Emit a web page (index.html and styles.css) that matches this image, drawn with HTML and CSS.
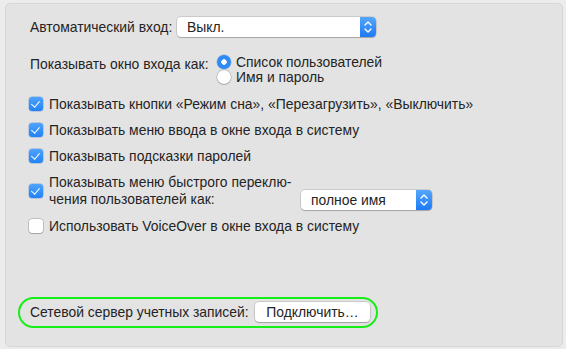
FILE: index.html
```html
<!DOCTYPE html>
<html lang="ru">

<head>
  <meta charset="UTF-8">
  <meta name="viewport" content="width=device-width, initial-scale=1.0">
  <title>Параметры входа</title>
  <link rel="stylesheet" href="styles.css">
</head>

<body>
  <div class="panel">
    <div class="row row-auto">
      <span class="label label-auto">Автоматический вход:</span>
      <div class="popup popup-auto">
        <span class="popup-value">Выкл.</span>
        <span class="stepper">
          <svg width="16" height="20" viewBox="0 0 16 20">
            <path d="M5 8 L8 5 L11 8" fill="none" stroke="#fff" stroke-width="1.4" stroke-linecap="round" stroke-linejoin="round"/>
            <path d="M5 12 L8 15 L11 12" fill="none" stroke="#fff" stroke-width="1.4" stroke-linecap="round" stroke-linejoin="round"/>
          </svg>
        </span>
      </div>
    </div>

    <div class="row row-login">
      <span class="label label-login">Показывать окно входа как:</span>
      <div class="radios">
        <div class="radio-item"><span class="radio checked"></span>Список пользователей</div>
        <div class="radio-item"><span class="radio"></span>Имя и пароль</div>
      </div>
    </div>

    <div class="checks">
      <div class="check-item"><span class="check checked"></span>Показывать кнопки «Режим сна», «Перезагрузить», «Выключить»</div>
      <div class="check-item"><span class="check checked"></span>Показывать меню ввода в окне входа в систему</div>
      <div class="check-item"><span class="check checked"></span>Показывать подсказки паролей</div>
      <div class="check-item check-switch">
        <span class="check checked"></span>
        <span class="switch-text">Показывать меню быстрого переклю-<br>чения пользователей как:</span>
        <div class="popup popup-name">
          <span class="popup-value">полное имя</span>
          <span class="stepper">
            <svg width="16" height="20" viewBox="0 0 16 20">
              <path d="M5 8 L8 5 L11 8" fill="none" stroke="#fff" stroke-width="1.4" stroke-linecap="round" stroke-linejoin="round"/>
              <path d="M5 12 L8 15 L11 12" fill="none" stroke="#fff" stroke-width="1.4" stroke-linecap="round" stroke-linejoin="round"/>
            </svg>
          </span>
        </div>
      </div>
      <div class="check-item"><span class="check"></span>Использовать VoiceOver в окне входа в систему</div>
    </div>

    <div class="server">
      <span class="label label-server">Сетевой сервер учетных записей:</span>
      <button class="btn">Подключить…</button>
    </div>
  </div>
</body>

</html>
```

FILE: styles.css
```css
html,
body {
  height: 100%;
}

body {
  margin: 0;
  background: #ececec;
  font-family: "Liberation Sans", Arial, sans-serif;
  font-size: 13.9px;
  color: #242424;
}

.panel {
  box-sizing: border-box;
  height: 344px;
  margin: 3px 3px 0 5px;
  padding: 13px 12px 0 12px;
  background: #e3e3e3;
  border: 1px solid #d6d6d6;
  border-radius: 5px;
  display: flex;
  flex-direction: column;
}

.label {
  white-space: nowrap;
}

.row {
  display: flex;
  padding-left: 12px;
}

.row-auto {
  align-items: center;
  height: 20px;
}

.label-auto {
  width: 147px;
}

.popup {
  box-sizing: border-box;
  height: 20px;
  display: flex;
  align-items: center;
  background: #fff;
  border-radius: 4px;
  box-shadow: 0 0 0 0.5px rgba(0, 0, 0, 0.22), 0 1px 1px rgba(0, 0, 0, 0.18);
  overflow: hidden;
}

.popup-value {
  flex: 1;
  padding-left: 10px;
}

.stepper {
  width: 16px;
  height: 20px;
  background: linear-gradient(#55a7fb, #1c7af5);
}

.stepper svg {
  display: block;
}

.popup-auto {
  width: 199px;
}

.row-login {
  margin-top: 17px;
}

.label-login {
  width: 187px;
  margin-top: 2px;
}

.radio-item {
  display: flex;
  align-items: center;
  height: 15px;
}

.radio {
  box-sizing: border-box;
  width: 14px;
  height: 14px;
  margin-right: 5px;
  border-radius: 50%;
  background: #fff;
  box-shadow: 0 0 0 0.5px rgba(0, 0, 0, 0.3), 0 1px 1px rgba(0, 0, 0, 0.15);
}

.radio.checked {
  background: radial-gradient(circle, #fff 0 2.5px, #2d8af7 3px);
  box-shadow: 0 0 0 0.5px rgba(20, 90, 200, 0.4);
}

.checks {
  margin-top: 12px;
  padding-left: 11px;
  display: flex;
  flex-direction: column;
  gap: 10px;
}

.check-item {
  display: flex;
  align-items: center;
  line-height: 16px;
  white-space: nowrap;
}

.check {
  box-sizing: border-box;
  flex: none;
  width: 14px;
  height: 14px;
  margin-right: 6px;
  border-radius: 3px;
  background: #fff;
  box-shadow: 0 0 0 0.5px rgba(0, 0, 0, 0.3), 0 1px 1px rgba(0, 0, 0, 0.15);
  position: relative;
}

.check.checked {
  background: linear-gradient(#4ea3fb, #2283f6);
  box-shadow: 0 0 0 0.5px rgba(20, 90, 200, 0.4);
}

.check.checked::after {
  content: "";
  position: absolute;
  left: 4px;
  top: 1.5px;
  width: 3.5px;
  height: 7px;
  border: solid #fff;
  border-width: 0 1.8px 1.8px 0;
  transform: rotate(40deg);
}

.switch-text {
  flex: none;
  width: 252px;
  line-height: 17px;
}

.popup-name {
  flex: none;
  width: 131px;
  align-self: flex-end;
  margin-bottom: -2px;
}

.server {
  align-self: flex-start;
  margin-top: auto;
  margin-bottom: 18px;
  display: flex;
  align-items: center;
  padding: 3px 6px 4px 10px;
  border: 2px solid #17ee17;
  border-radius: 16px;
}

.label-server {
  width: 225px;
}

.btn {
  width: 115px;
  height: 20px;
  padding: 0;
  border: none;
  border-radius: 4px;
  background: #fff;
  font-family: inherit;
  font-size: 13.9px;
  color: #242424;
  box-shadow: 0 0 0 0.5px rgba(0, 0, 0, 0.22), 0 1px 1px rgba(0, 0, 0, 0.2);
}
```
